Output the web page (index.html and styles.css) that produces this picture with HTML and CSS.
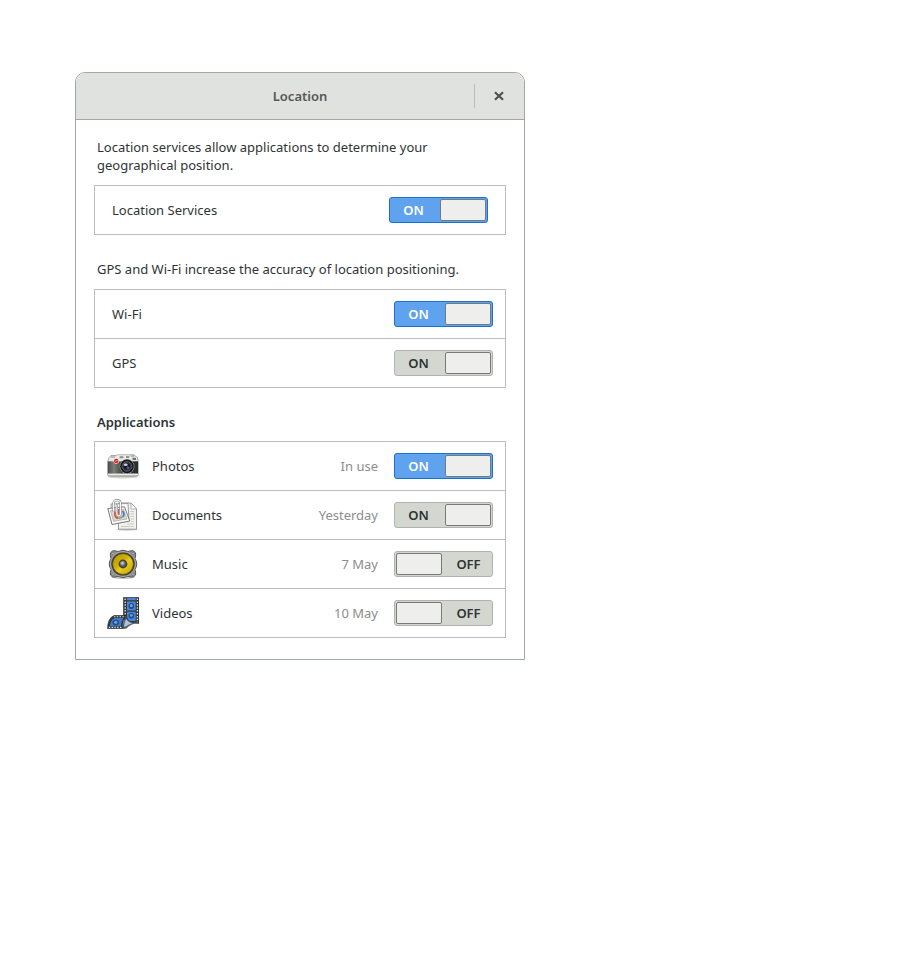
FILE: index.html
```html
<!DOCTYPE html>
<html lang="en">
<head>
<meta charset="utf-8">
<title>Location</title>
<link rel="stylesheet" href="styles.css">
</head>
<body>
<main class="window">
  <header class="titlebar">
    <h1 class="title">Location</h1>
    <button class="close" type="button" aria-label="Close">
      <svg viewBox="0 0 10 10" width="10" height="10"><path d="M1 1.2 9 8.8M9 1.2 1 8.8" stroke="#4c5050" stroke-width="2.2" fill="none"/></svg>
    </button>
  </header>
  <div class="content">
    <section class="section">
      <p class="hint">Location services allow applications to determine your geographical position.</p>
      <ul class="list">
        <li class="row row-main"><label class="name" for="services">Location Services</label>
          <span class="switch"><input type="checkbox" id="services" checked><span class="on">ON</span><span class="off">OFF</span><span class="knob"></span></span></li>
      </ul>
    </section>
    <section class="section">
      <p class="hint">GPS and Wi-Fi increase the accuracy of location positioning.</p>
      <ul class="list">
        <li class="row row-source"><label class="name" for="wifi">Wi-Fi</label>
          <span class="switch"><input type="checkbox" id="wifi" checked><span class="on">ON</span><span class="off">OFF</span><span class="knob"></span></span></li>
        <li class="row row-source"><label class="name" for="gps">GPS</label>
          <span class="switch idle"><input type="checkbox" id="gps" checked><span class="on">ON</span><span class="off">OFF</span><span class="knob"></span></span></li>
      </ul>
    </section>
    <section class="section">
      <h2 class="heading">Applications</h2>
      <ul class="list">
        <li class="row">
          <svg class="icon" viewBox="0 0 32 32" aria-hidden="true">
            <defs>
              <linearGradient id="silver" x2="0" y2="1"><stop offset="0" stop-color="#f4f4f2"/><stop offset="1" stop-color="#c0c1bf"/></linearGradient>
              <linearGradient id="leather"><stop offset="0" stop-color="#4a4c48"/><stop offset=".2" stop-color="#7b7e79"/><stop offset=".5" stop-color="#3a3c39"/><stop offset="1" stop-color="#2b2d2a"/></linearGradient>
            </defs>
            <ellipse cx="16" cy="27" rx="15" ry="1.5" fill="#000" opacity=".18"/>
            <path d="M2 7.5 4 5.5H9L10 4.8H27L28 6 30.5 7.5 31.3 12V24.5Q31.3 26.2 29.5 26.2H2.5Q.6 26.2.6 24.5V12Z" fill="url(#silver)" stroke="#90928f" stroke-width=".7"/>
            <path d="M4 5.5H8V7.5H4ZM24 5H27V6.8H24Z" fill="#c5c6c3" stroke="#888" stroke-width=".4"/>
            <rect x="12.5" y="6.2" width="4" height="2" rx=".5" fill="#8b8e8b"/><rect x="19" y="6" width="3.2" height="2" fill="#90948f"/><rect x="25.5" y="7.8" width="3.5" height="2.2" fill="#70726e"/>
            <path d="M.9 11.3H31V23.4H.9Z" fill="url(#leather)"/>
            <path d="M1.3 24.5H30.7" stroke="#eee"/>
            <circle cx="9.2" cy="11" r="2.7" fill="#eee"/><circle cx="9.2" cy="11" r="2.2" fill="#e31b14"/><path d="M8 11.2 10.5 10.5" stroke="#fff" stroke-width=".6"/>
            <circle cx="20" cy="16.4" r="7.4" fill="#a6a8a6"/><circle cx="20" cy="16.4" r="6.8" fill="#161718"/>
            <circle cx="20" cy="16.4" r="4.8" fill="#343840" stroke="#6b6e75" stroke-width=".7"/>
            <circle cx="20" cy="16.5" r="3.2" fill="#15182b"/><circle cx="21" cy="17.8" r="1.6" fill="#51518a"/><ellipse cx="18.7" cy="14.7" rx="2" ry="1.2" fill="#c7ccdc"/>
          </svg>
          <label class="name" for="photos">Photos</label><span class="meta">In use</span>
          <span class="switch"><input type="checkbox" id="photos" checked><span class="on">ON</span><span class="off">OFF</span><span class="knob"></span></span></li>
        <li class="row">
          <svg class="icon" viewBox="0 0 32 32" aria-hidden="true">
            <ellipse cx="20" cy="30.5" rx="11" ry="1.2" fill="#000" opacity=".2"/>
            <path d="M11.5 4H24L29.5 10V30.2H11.5Z" fill="#f1f1ef" stroke="#8f918e" stroke-width=".9"/>
            <path d="M24 4V10H29.5Z" fill="#fff" stroke="#999" stroke-width=".7"/>
            <path d="M23 12.5H27M23 15H27M23.5 17.5H27M24 20H27M24 22.5H27M14 27.5H27M20 25H27" stroke="#c6c7c5" stroke-width=".9"/>
            <path d="M4 5 21 4.5 22 22 5.5 24Z" fill="#fff" stroke="#8f918e" stroke-width=".9"/>
            <path d="M.8 9.5 17.5 7.8 22.8 22 5 25.5Z" fill="#fcfcfa" stroke="#777977" stroke-width="1"/>
            <path d="M3.5 11.5 16.5 10.2 20 20 6.5 22.3Z" fill="#d7d9d5" stroke="#969894" stroke-width=".6"/>
            <path d="M8 12.5V16Q8.4 19.3 11.5 19.2" stroke="#e04c3e" stroke-width="1.7" fill="none"/>
            <path d="M15.5 12Q18.3 15.5 15.5 18" stroke="#4b79c8" stroke-width="1.7" fill="none"/>
            <path d="M11.3 19.2Q14 19.4 15.4 17.8" stroke="#8aa36c" stroke-width="1.4" fill="none"/>
            <path d="M6.5 12V4.3Q6.5 1.2 10 1.2T13.5 4.3V14.5Q13.5 17 11.7 17T9.8 14.5V6" fill="none" stroke="#888a87" stroke-width="2.2" stroke-linecap="round"/>
            <path d="M6.5 12V4.3Q6.5 1.2 10 1.2T13.5 4.3V14.5Q13.5 17 11.7 17T9.8 14.5V6" fill="none" stroke="#f6f6f5" stroke-width="1.1" stroke-linecap="round"/>
            <path d="M11.7 10V15.5" fill="none" stroke="#c6443c"/>
          </svg>
          <label class="name" for="documents">Documents</label><span class="meta">Yesterday</span>
          <span class="switch idle"><input type="checkbox" id="documents" checked><span class="on">ON</span><span class="off">OFF</span><span class="knob"></span></span></li>
        <li class="row">
          <svg class="icon" viewBox="0 0 32 32" aria-hidden="true">
            <defs>
              <linearGradient id="cone" x2="1" y2="1"><stop offset="0" stop-color="#b79a00"/><stop offset=".4" stop-color="#cdad08"/><stop offset=".55" stop-color="#e6cb20"/><stop offset="1" stop-color="#c4a400"/></linearGradient>
              <radialGradient id="cap" cx=".4" cy=".35"><stop offset="0" stop-color="#ddd"/><stop offset="1" stop-color="#555"/></radialGradient>
            </defs>
            <ellipse cx="16" cy="29.3" rx="11" ry="1.8" fill="#000" opacity=".22"/>
            <path d="M5.5 2.8H8.5L11 3.5Q16 1 21 3.5L23.5 2.8H26.5L28.6 5V8L28 10.5Q31.5 16 28 21.5L28.6 24V27L26.5 29H23.5L21 28.3Q16 31 11 28.3L8.5 29H5.5L3.4 27V24L4 21.5Q.5 16 4 10.5L3.4 8V5Z" fill="#8e918e" stroke="#4c4e4c" stroke-width=".9"/>
            <circle cx="16" cy="16" r="12.6" fill="none" stroke="#b0b2af" stroke-width=".6"/>
            <circle cx="16" cy="16" r="11.6" fill="#3b3c34"/><circle cx="16" cy="16" r="10.3" fill="url(#cone)" stroke="#6c5900" stroke-width=".6"/>
            <circle cx="16" cy="16" r="4.4" fill="#44432f"/><circle cx="16" cy="16" r="3.1" fill="url(#cap)"/>
            <g fill="#d0d1cf" stroke="#555755" stroke-width=".5"><circle cx="6" cy="5.6" r="1.1"/><circle cx="26" cy="5.6" r="1.1"/><circle cx="6" cy="26.2" r="1.1"/><circle cx="26" cy="26.2" r="1.1"/></g>
          </svg>
          <label class="name" for="music">Music</label><span class="meta">7 May</span>
          <span class="switch idle"><input type="checkbox" id="music"><span class="on">ON</span><span class="off">OFF</span><span class="knob"></span></span></li>
        <li class="row">
          <svg class="icon" viewBox="0 0 32 32" aria-hidden="true">
            <path d="M16.5.5H32V26.5Q29 25 25 26L20 26 16.5 20Z" fill="#34383b" stroke="#24272a" stroke-width=".6"/>
            <path d="M20 .9H28.7V3.3H20ZM20 4.5H28.7V13.6H20ZM20 14.8H28.7V24H22L20 20Z" fill="#4a86d3"/>
            <path d="M18.2 1.5V20M30.4 1.5V25.5" stroke="#e2e4e5" stroke-width="1.3" stroke-dasharray="1.5 1.4"/>
            <ellipse cx="24.3" cy="9" rx="2.8" ry="3" fill="#214b84"/><ellipse cx="24.3" cy="8.6" rx="1.5" ry="1.6" fill="#6ba3e8"/><ellipse cx="24.3" cy="18.8" rx="2.8" ry="2.8" fill="#214b84"/><ellipse cx="24.3" cy="18.4" rx="1.4" ry="1.4" fill="#6ba3e8"/>
            <path d="M18.5 18.5Q20 26 31 26 24 26 19.5 31 18 31.5 15.5 31.5Z" fill="#596270" stroke="#34383b" stroke-width=".6"/>
            <path d="M.5 31.5Q.8 21 7 18.5H19.5Q15.5 22 15.5 31.5Z" fill="#34383b" stroke="#24272a" stroke-width=".6"/>
            <path d="M2.6 29.2Q3.6 23 7.5 21H16.4Q14.3 24 13.8 29.2Z" fill="#3f7ac6"/>
            <path d="M19.3 22Q21 25.5 25.5 26.3 21.5 27.5 19 29.3L17 29.8Q17 25 19.3 22Z" fill="#a6c5e8"/>
            <path d="M7 19.7H18.5M1.8 30.4H15" stroke="#e2e4e5" stroke-width="1.1" stroke-dasharray="1.4 1.4"/>
            <ellipse cx="8.8" cy="25.6" rx="3.3" ry="2.8" fill="#214b84"/><ellipse cx="8.8" cy="25.2" rx="1.7" ry="1.5" fill="#6ba3e8"/>
          </svg>
          <label class="name" for="videos">Videos</label><span class="meta">10 May</span>
          <span class="switch idle"><input type="checkbox" id="videos"><span class="on">ON</span><span class="off">OFF</span><span class="knob"></span></span></li>
      </ul>
    </section>
  </div>
</main>
</body>
</html>
```
FILE: styles.css
```css
* { box-sizing: border-box; }

body {
  margin: 0;
  padding: 72px 75px;
  background: #fff;
  color: #2e3436;
  font: 13px/18px "Noto Sans", "Open Sans", sans-serif;
}

h1, h2, p, ul { margin: 0; padding: 0; }

.window {
  max-width: 450px;
  border: 1px solid #a1a8a5;
  border-radius: 10px 10px 0 0;
  overflow: hidden;
}

.titlebar {
  display: grid;
  grid-template-columns: 50px 1fr 50px;
  align-items: center;
  height: 47px;
  background: #e0e2df;
  border-bottom: 1px solid #a1a8a5;
}

.title {
  grid-column: 2;
  text-align: center;
  font-size: 13px;
  font-weight: 600;
  line-height: 18px;
  color: #555753;
}

.close {
  display: grid;
  place-items: center;
  height: 24px;
  padding: 0 2px 0 0;
  border: 0;
  border-left: 1px solid #babdb8;
  background: none;
}

.content { padding: 18px 18px 21px; }
.section + .section { margin-top: 25px; }

.hint {
  max-width: 380px;
  padding-left: 3px;
  margin-bottom: 11px;
}

.heading {
  padding-left: 3px;
  margin-bottom: 10px;
  font-size: 13px;
  font-weight: 600;
  line-height: 18px;
}

.list {
  list-style: none;
  border: 1px solid #babdb8;
}

.row {
  display: flex;
  align-items: center;
  height: 48px;
  padding: 0 12px;
}

.row + .row {
  height: 49px;
  border-top: 1px solid #babdb8;
}

.row-main { padding: 0 17px; }
.row-source { padding-left: 17px; }

.icon {
  width: 32px;
  height: 32px;
  margin-right: 13px;
}

.name { flex: 1; }

.meta {
  margin-right: 16px;
  color: #8b8e8b;
}

.switch {
  display: grid;
  grid-template: 26px / 1fr 1fr;
  align-items: center;
  width: 99px;
  font-weight: 600;
}

.switch > * { grid-row: 1; pointer-events: none; }

.switch input {
  grid-column: 1 / 3;
  appearance: none;
  pointer-events: auto;
  width: 100%;
  height: 26px;
  margin: 0;
  border: 1px solid #b0b4b0;
  border-radius: 3px;
  background: #d3d7cf;
}

.on, .off { text-align: center; }
.on { grid-column: 1; visibility: hidden; }
.off { grid-column: 2; }

.knob {
  grid-column: 1;
  width: 46px;
  height: 22px;
  margin: 0 2px;
  border: 1px solid #777b77;
  border-radius: 2px;
  background: #eeeeec;
}

input:checked ~ .on { visibility: visible; }
input:checked ~ .off { visibility: hidden; }
input:checked ~ .knob { grid-column: 2; justify-self: end; }

.switch:not(.idle) input:checked { border-color: #1c71d0; background: #5fa2ee; }
.switch:not(.idle) input:checked ~ .on { color: #fff; }
```
